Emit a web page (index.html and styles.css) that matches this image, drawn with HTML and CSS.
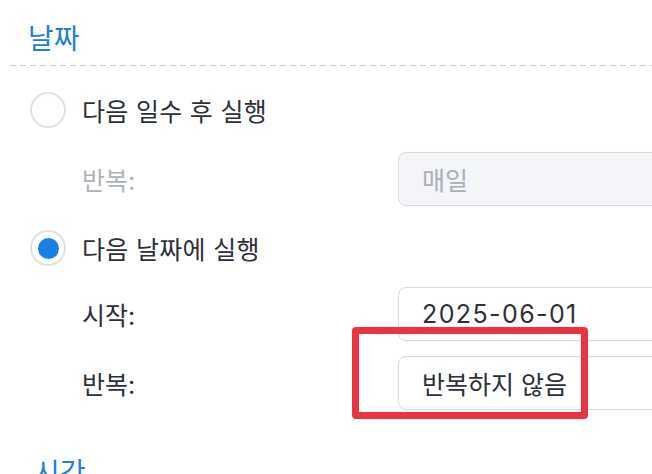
FILE: index.html
```html
<html>
<head>
    <meta charset="utf-8">
    <title>날짜 설정</title>
    <link rel="stylesheet" href="styles.css">
</head>
<body>
    <div class="panel">
        <h2 class="section-title">날짜</h2>
        <div class="divider"></div>

        <div class="option">
            <span class="radio"></span>
            <span class="option-text">다음 일수 후 실행</span>
        </div>
        <div class="field field-first">
            <span class="field-label disabled">반복:</span>
            <div class="input disabled">매일</div>
        </div>

        <div class="option option-second">
            <span class="radio checked"></span>
            <span class="option-text">다음 날짜에 실행</span>
        </div>
        <div class="field field-start">
            <span class="field-label">시작:</span>
            <div class="input date">2025-06-01</div>
        </div>
        <div class="field field-repeat">
            <span class="field-label">반복:</span>
            <div class="input">반복하지 않음</div>
            <div class="highlight"></div>
        </div>

        <h2 class="section-title next">시간</h2>
    </div>
</body>
</html>
```

FILE: styles.css
```css
* {box-sizing:border-box;}
body {margin:0;background:#fff;overflow:hidden;font-family:"Inter","Noto Sans CJK KR","Noto Sans",sans-serif;color:#2c3139;}
.panel {padding:0 0 0 10px;width:800px;}

.section-title {margin:0;padding:22px 0 0 18px;height:65px;font-size:28px;font-weight:400;color:#1d80d4;line-height:34px;}
.section-title.next {padding-top:46px;padding-left:24px;}
.divider {height:1px;background:repeating-linear-gradient(to right,#c9ccd1 0,#c9ccd1 6px,transparent 6px,transparent 10px);}

.option {display:flex;align-items:center;gap:16px;height:36px;margin:26px 0 0 20px;}
.option-second {margin-top:24px;}
.radio {width:36px;height:36px;border:2px solid #dfe2e6;border-radius:50%;display:flex;align-items:center;justify-content:center;background:#fff;}
.radio.checked::after {content:"";width:21px;height:21px;border-radius:50%;background:#1a80e6;}
.option-text {font-size:25px;letter-spacing:0.3px;}

.field {position:relative;display:flex;align-items:center;height:54px;padding-left:72px;}
.field-first {margin-top:24px;}
.field-start {margin-top:21px;}
.field-repeat {margin-top:15px;}
.field-label {width:316px;font-size:25px;}
.field-label.disabled {color:#aeb3ba;}
.input {width:400px;height:54px;border:1.5px solid #d5dae1;border-radius:8px;padding:0 23px;display:flex;align-items:center;font-size:25px;}
.input.disabled {background:#f3f5f8;color:#a9aeb6;}
.input.date {letter-spacing:1.4px;}

.highlight {position:absolute;left:342px;top:-29px;width:236px;height:92px;border:7px solid #ea3442;border-radius:4px;}
```
